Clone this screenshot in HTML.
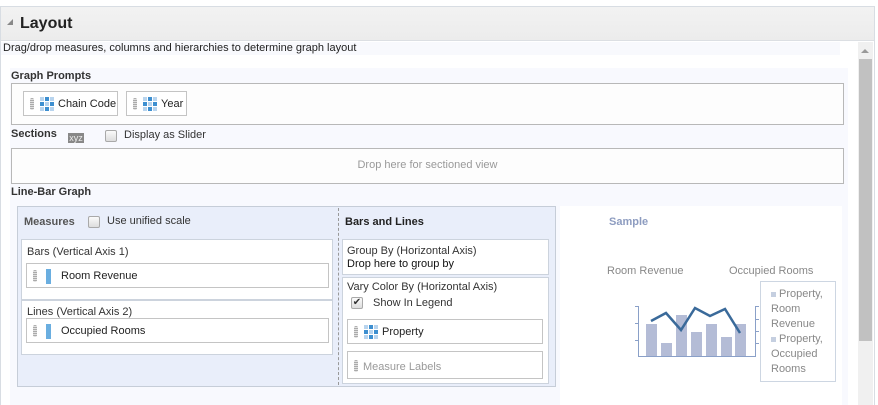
<!DOCTYPE html>
<html><head><meta charset="utf-8"><style>
*{margin:0;padding:0;box-sizing:border-box}
body{width:878px;height:405px;background:#fff;font-family:"Liberation Sans",Arial,sans-serif;font-size:11px;color:#222;position:relative;overflow:hidden}
.a{position:absolute;white-space:nowrap}
.b{font-weight:bold;color:#333}
.box{position:absolute;border:1px solid #b8b8b8;background:#fdfdfd}
.item{position:absolute;border:1px solid #c4c4c4;background:#fff;height:25px;white-space:nowrap}
.grip{position:absolute;left:6px;top:6px;width:4px;height:12px;background:repeating-linear-gradient(#aaa 0 1px,#e0e0e0 1px 2px);border-radius:2px}
.grid{position:absolute;left:16px;top:5px;width:14px;height:14px;display:grid;grid-template-columns:repeat(3,4px);grid-template-rows:repeat(3,4px);gap:1px}
.grid i{background:#3d8fd0}.grid i.l{background:#b8d4ee}
.ruler{position:absolute;left:19px;top:5px;width:6px;height:15px;background:#6aaee0;border-right:1px solid #fff}
.it{position:absolute;left:34px;top:6px;font-size:11px;color:#222}
.cb{position:absolute;width:12px;height:12px;border:1px solid #a9a9a9;border-radius:2px;background:linear-gradient(#fafafa,#ddd)}
.lbl{position:absolute;font-size:11px;color:#333;white-space:nowrap}
</style></head><body>
<div class="a" style="left:0;top:6px;width:875px;height:399px;border:1px solid #d8dde3;border-bottom:none"></div>
<div class="a" style="left:1px;top:7px;width:873px;height:34px;background:linear-gradient(#f2f2f2,#ececec);border-bottom:1px solid #dcdfe3"></div>
<div class="a" style="left:7px;top:19px;width:0;height:0;border-left:6px solid transparent;border-bottom:6px solid #888"></div>
<div class="a" style="left:20px;top:15px;font-size:16px;font-weight:bold;color:#222">Layout</div>
<div class="a" style="left:1px;top:42px;width:839px;height:13px;background:#f8f9fd"></div>
<div class="a" style="left:3px;top:42px;font-size:11px;color:#222">Drag/drop measures, columns and hierarchies to determine graph layout</div>
<!-- scrollbar -->
<div class="a" style="left:858px;top:42px;width:15px;height:363px;background:#f0f0f0"></div>
<div class="a" style="left:861px;top:49px;width:0;height:0;border-left:4px solid transparent;border-right:4px solid transparent;border-bottom:4px solid #999"></div>
<div class="a" style="left:859px;top:59px;width:13px;height:282px;background:#c1c1c1"></div>
<!-- content -->
<div class="a" style="left:10px;top:68px;width:838px;height:337px;background:#f8f9fe"></div>
<div class="a b" style="left:11px;top:70px">Graph Prompts</div>
<div class="box" style="left:11px;top:83px;width:833px;height:42px"></div>
<div class="item" style="left:23px;top:91px;width:95px"><div class="grip"></div><div class="grid"><i class="l"></i><i></i><i class="l"></i><i></i><i class="l"></i><i></i><i class="l"></i><i></i><i class="l"></i></div><div class="it">Chain Code</div></div>
<div class="item" style="left:126px;top:91px;width:61px"><div class="grip"></div><div class="grid"><i class="l"></i><i></i><i class="l"></i><i></i><i class="l"></i><i></i><i class="l"></i><i></i><i class="l"></i></div><div class="it">Year</div></div>
<div class="a b" style="left:11px;top:128px">Sections</div>
<div class="a" style="left:68px;top:133px;width:16px;height:10px;background:#888;color:#eee;font-size:9px;line-height:10px;text-align:center">xyz</div>
<div class="cb" style="left:105px;top:130px"></div>
<div class="lbl" style="left:124px;top:129px">Display as Slider</div>
<div class="box" style="left:11px;top:148px;width:833px;height:36px"></div>
<div class="a" style="left:11px;top:159px;width:833px;text-align:center;color:#999">Drop here for sectioned view</div>
<div class="a b" style="left:11px;top:186px">Line-Bar Graph</div>
<!-- big panel -->
<div class="a" style="left:17px;top:206px;width:539px;height:181px;background:#e9eefa;border:1px solid #c6cdd8"></div>
<div class="a" style="left:338px;top:208px;height:177px;border-left:1px dashed #999"></div>
<div class="a" style="left:24px;top:216px;font-weight:bold;color:#555">Measures</div>
<div class="cb" style="left:88px;top:216px"></div>
<div class="lbl" style="left:107px;top:215px">Use unified scale</div>
<div class="a" style="left:21px;top:239px;width:312px;height:61px;background:#fff;border:1px solid #ccd3dd"></div>
<div class="lbl" style="left:27px;top:246px">Bars (Vertical Axis 1)</div>
<div class="item" style="left:26px;top:263px;width:303px"><div class="grip"></div><div class="ruler"></div><div class="it">Room Revenue</div></div>
<div class="a" style="left:21px;top:300px;width:312px;height:55px;background:#fff;border:1px solid #ccd3dd"></div>
<div class="lbl" style="left:27px;top:306px">Lines (Vertical Axis 2)</div>
<div class="item" style="left:26px;top:318px;width:303px"><div class="grip"></div><div class="ruler"></div><div class="it">Occupied Rooms</div></div>
<div class="a b" style="left:345px;top:216px;color:#222">Bars and Lines</div>
<div class="a" style="left:342px;top:239px;width:207px;height:36px;background:#fff;border:1px solid #ccd3dd"></div>
<div class="lbl" style="left:347px;top:245px">Group By (Horizontal Axis)</div>
<div class="lbl" style="left:347px;top:258px;color:#111">Drop here to group by</div>
<div class="a" style="left:342px;top:277px;width:207px;height:107px;background:#fff;border:1px solid #ccd3dd"></div>
<div class="lbl" style="left:347px;top:281px">Vary Color By (Horizontal Axis)</div>
<div class="cb" style="left:351px;top:297px;font-size:10px;line-height:10px;text-align:center;color:#333">✔</div>
<div class="lbl" style="left:373px;top:297px">Show In Legend</div>
<div class="item" style="left:347px;top:319px;width:196px"><div class="grip"></div><div class="grid"><i class="l"></i><i></i><i class="l"></i><i></i><i class="l"></i><i></i><i class="l"></i><i></i><i class="l"></i></div><div class="it">Property</div></div>
<div class="item" style="left:347px;top:351px;width:196px;height:28px"><div class="grip" style="top:8px"></div><div class="it" style="left:15px;top:9px;color:#999">Measure Labels</div></div>
<!-- sample -->
<div class="a" style="left:560px;top:206px;width:282px;height:199px;background:#fff"></div>
<div class="a" style="left:609px;top:216px;font-weight:bold;color:#8d9cc0">Sample</div>
<div class="a" style="left:607px;top:265px;color:#888;font-size:11px">Room Revenue</div>
<div class="a" style="left:729px;top:265px;color:#888;font-size:11px">Occupied Rooms</div>
<svg class="a" style="left:630px;top:300px" width="135" height="60">
<g fill="#b4bcd6"><rect x="16" y="24" width="11" height="32"/><rect x="31" y="43" width="11" height="13"/><rect x="46" y="15" width="11" height="41"/><rect x="61" y="32" width="11" height="24"/><rect x="76" y="24" width="11" height="32"/><rect x="91" y="37" width="11" height="19"/><rect x="105" y="24" width="11" height="32"/></g>
<g stroke="#8aa0c8" fill="none"><path d="M8.5 6V56.5H125.5V6"/><path d="M5 6.5H8M5 23.5H8M5 40.5H8M125 6.5H129M125 19.5H129M125 31.5H129M125 43.5H129"/></g>
<path d="M21 21L36 13L51 30L65 8L80 16L95 9L110 33" stroke="#3a6a9a" stroke-width="2.5" fill="none"/>
</svg>
<div class="a" style="left:760px;top:281px;width:76px;height:101px;border:1px solid #cdd6e2;background:#fff;color:#888;font-size:11px;line-height:15px;padding:5px 0 0 10px;white-space:normal">
<span style="display:inline-block;width:5px;height:5px;background:#c5cfe0;vertical-align:middle"></span> Property, Room Revenue<br><span style="display:inline-block;width:5px;height:5px;background:#c5cfe0;vertical-align:middle"></span> Property, Occupied Rooms</div>
</body></html>
